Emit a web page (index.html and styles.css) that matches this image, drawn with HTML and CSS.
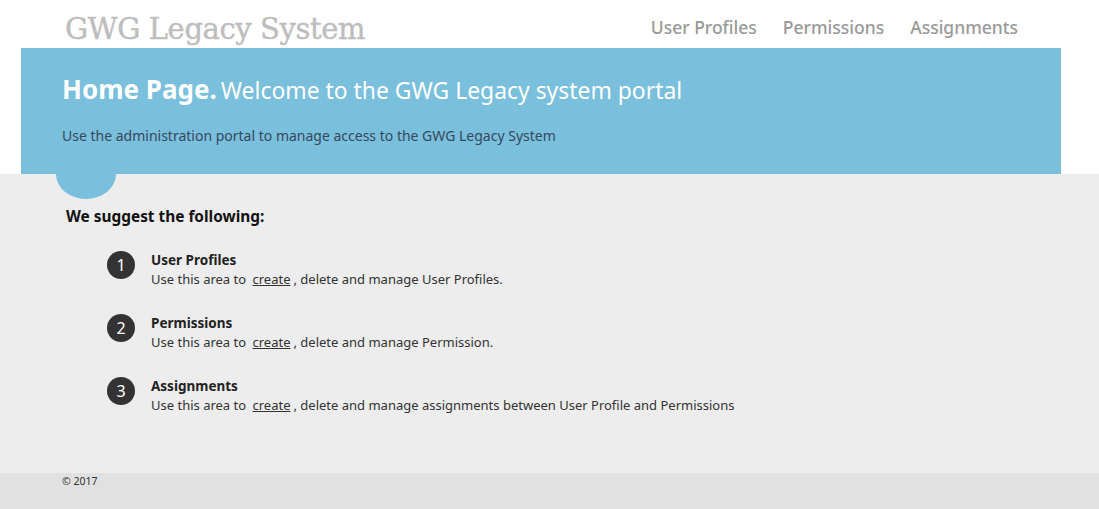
FILE: index.html
```html
<!DOCTYPE html>
<html lang="en">
<head>
    <meta charset="UTF-8">
    <title>GWG Legacy System</title>
    <link rel="stylesheet" href="styles.css">
</head>
<body>
    <div class="top">
        <header class="topbar">
            <div class="brand">GWG Legacy System</div>
            <nav class="menu">
                <a href="#">User Profiles</a>
                <a href="#">Permissions</a>
                <a href="#">Assignments</a>
            </nav>
        </header>

        <div class="jumbotron">
            <h1><b>Home Page.</b>Welcome to the GWG Legacy system portal</h1>
            <p>Use the administration portal to manage access to the GWG Legacy System</p>
        </div>
    </div>

    <main class="content">
        <div class="bubble"></div>
        <h2>We suggest the following:</h2>

        <ul class="steps">
            <li>
                <span class="num">1</span>
                <div>
                    <h3>User Profiles</h3>
                    <p>Use this area to <a href="#">create</a>, delete and manage User Profiles.</p>
                </div>
            </li>
            <li>
                <span class="num">2</span>
                <div>
                    <h3>Permissions</h3>
                    <p>Use this area to <a href="#">create</a>, delete and manage Permission.</p>
                </div>
            </li>
            <li>
                <span class="num">3</span>
                <div>
                    <h3>Assignments</h3>
                    <p>Use this area to <a href="#">create</a>, delete and manage assignments between User Profile and Permissions</p>
                </div>
            </li>
        </ul>
    </main>

    <footer class="footer">&copy; 2017</footer>
</body>
</html>
```

FILE: styles.css
```css
body {
    margin: 0;
    font-family: "Noto Sans", "Open Sans", sans-serif;
    background-color: #ededed;
}

.top {
    background: #fff;
}

/* top bar */
.topbar {
    height: 48px;
    display: flex;
    justify-content: space-between;
    align-items: flex-end;
    padding: 0 81px 0 65px;
}

.brand {
    font-family: "DejaVu Serif", serif;
    font-size: 29px;
    color: #bdbdbd;
    letter-spacing: -0.4px;
    line-height: 1;
    padding-bottom: 4px;
    -webkit-text-stroke: 0.4px #bdbdbd;
}

.menu {
    display: flex;
    gap: 26px;
    align-self: flex-start;
    padding-top: 15px;
}

.menu a {
    color: #999;
    text-decoration: none;
    font-size: 17.5px;
    font-weight: 500;
}

/* banner */
.jumbotron {
    background: #7abfdb;
    margin: 0 38px 0 21px;
    padding: 24px 41px 0;
    height: 102px;
    color: #fff;
}

.jumbotron h1 {
    margin: 0;
    font-size: 22.9px;
    font-weight: normal;
    line-height: 34px;
}

.jumbotron h1 b {
    font-size: 26px;
    font-weight: bold;
    margin-right: 4px;
}

.jumbotron p {
    margin: 18px 0 0;
    font-size: 14px;
    color: #34495e;
}

/* main */
.content {
    position: relative;
    padding: 0 0 33px 66px;
    background: #ededed;
}

.bubble {
    position: absolute;
    left: 56px;
    top: 0;
    width: 60px;
    height: 25px;
    background: #7abfdb;
    border-radius: 0 0 30px 30px / 0 0 25px 25px;
}

.content h2 {
    margin: 0;
    padding-top: 32px;
    font-size: 15.4px;
    font-weight: bold;
    color: #111;
}

.steps {
    list-style: none;
    margin: 24px 0 0;
    padding: 0 0 0 41px;
}

.steps li {
    display: flex;
    gap: 16px;
    height: 63px;
}

.num {
    width: 28px;
    height: 28px;
    border-radius: 50%;
    background: #333;
    color: #fff;
    font-size: 16px;
    display: flex;
    align-items: center;
    justify-content: center;
    flex-shrink: 0;
}

.steps h3 {
    margin: 0;
    font-size: 13.5px;
    font-weight: bold;
    color: #222;
    line-height: 18px;
}

.steps p {
    margin: 1px 0 0;
    font-size: 13px;
    color: #333;
    line-height: 18px;
}

.steps a {
    color: #333;
    margin: 0 3px;
}

.footer {
    background: #e1e1e1;
    height: 36px;
    padding-left: 62px;
    font-size: 10.5px;
    color: #333;
    line-height: 16px;
}
```
